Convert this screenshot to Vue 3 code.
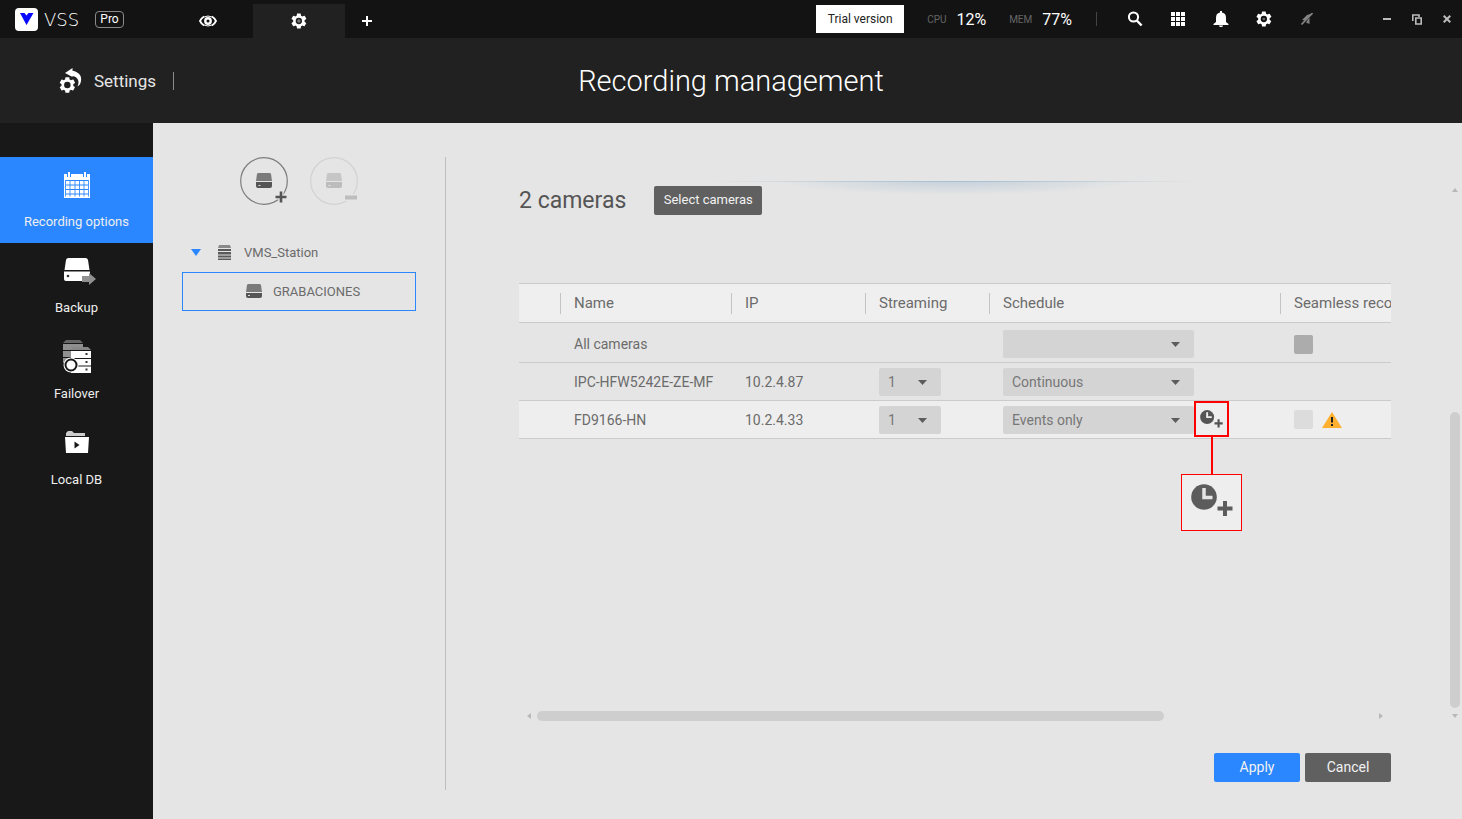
<script setup>
import { ref } from 'vue'

const navItems = [
  { id: 'recording', label: 'Recording options' },
  { id: 'backup', label: 'Backup' },
  { id: 'failover', label: 'Failover' },
  { id: 'local', label: 'Local DB' },
]
const activeNav = ref('recording')

const cameras = ref([
  { name: 'IPC-HFW5242E-ZE-MF', ip: '10.2.4.87', stream: '1', schedule: 'Continuous' },
  { name: 'FD9166-HN', ip: '10.2.4.33', stream: '1', schedule: 'Events only' },
])
const allSchedule = ref('')
const gearPath =
  'M19.4 13c.1-.3.1-.7.1-1s0-.7-.1-1l2.2-1.7c.2-.1.2-.4.1-.6l-2-3.5c-.2-.2-.4-.3-.7-.2l-2.6 1c-.5-.4-1.1-.7-1.7-1l-.4-2.6C14.3 2.2 14 2 13.8 2h-4c-.3 0-.5.2-.5.4L8.900 5c-.6.3-1.2.6-1.7 1l-2.500-1c-.3-.1-.5 0-.6.2l-2 3.500c-.1.2-.1.4.1.6L4.300 11c0 .3-.1.7-.1 1s0 .7.1 1l-2.100 1.700c-.2.1-.2.4-.1.6l2 3.500c.1.2.4.3.6.2l2.500-1c.5.4 1.100.7 1.700 1l.4 2.600c0 .2.2.4.5.4h4c.3 0 .5-.2.5-.4l.4-2.600c.6-.3 1.200-.6 1.700-1l2.500 1c.2.1.5 0 .6-.2l2-3.500c.1-.2.1-.5-.1-.6L19.400 13zM11.800 16.200a4.200 4.200 0 1 1 0-8.400 4.200 4.200 0 0 1 0 8.400z'
</script>

<template>
  <div class="app">
    <header class="topbar">
      <div class="brand">
        <svg class="brand-mark" width="23" height="23" viewBox="0 0 23 23" aria-hidden="true">
          <rect width="23" height="23" rx="4" fill="#fff" />
          <path d="M5 5h4.500l2 2.500L13.500 5H18.500l-7 12z" fill="#0808fa" />
        </svg>
        <span class="brand-name">VSS</span>
        <span class="brand-badge">Pro</span>
      </div>
      <nav class="tabs" aria-label="Tabs">
        <button class="tab" aria-label="Live view">
          <svg width="18" height="12" viewBox="0 0 18 12">
            <path d="M5 1.500Q2.500 3 1 6q1.500 3 4 4.500M13 1.500Q15.500 3 17 6q-1.500 3-4 4.500" fill="none" stroke="#fff" stroke-width="1.800" />
            <path d="M5 2Q9 0 13 2M5 10q4 2 8 0" fill="none" stroke="#fff" stroke-width="1" />
            <circle cx="9" cy="6" r="2.700" fill="none" stroke="#fff" stroke-width="2.400" />
          </svg>
        </button>
        <button class="tab tab-active" aria-label="Settings tab">
          <svg width="18" height="18" viewBox="0 0 24 24"><path :d="gearPath" fill="#fff" /><circle cx="11.800" cy="12" r="2.200" fill="#777" /></svg>
        </button>
        <button class="tab tab-add" aria-label="Add tab">
          <svg width="10" height="10" viewBox="0 0 10 10"><path d="M5 0v10M0 5h10" stroke="#fff" stroke-width="2" /></svg>
        </button>
      </nav>
      <div class="status">
        <button class="trial">Trial version</button>
        <span class="meter-label">CPU</span><span class="meter-value">12%</span>
        <span class="meter-label">MEM</span><span class="meter-value">77%</span>
        <span class="divider"></span>
      </div>
      <div class="tools">
        <button class="tool" aria-label="Search">
          <svg width="16" height="16" viewBox="0 0 16 16"><circle cx="6.500" cy="6" r="4.600" fill="none" stroke="#fff" stroke-width="2" /><path d="M9.800 9.500l4.800 5" stroke="#fff" stroke-width="2.500" /></svg>
        </button>
        <button class="tool" aria-label="Applications">
          <svg width="14" height="14" viewBox="0 0 14 14" fill="#fff"><path d="M0 0h4v4H0zM5 0h4v4H5zM10 0h4v4h-4zM0 5h4v4H0zM5 5h4v4H5zM10 5h4v4h-4zM0 10h4v4H0zM5 10h4v4H5zM10 10h4v4h-4z" /></svg>
        </button>
        <button class="tool" aria-label="Notifications">
          <svg width="16" height="16" viewBox="0 0 16 16" fill="#fff"><path d="M7 0h2v1.500C12 2 13 4 13 7v4l2.500 2v1h-15v-1L3 11V7c0-3 1-5 4-5.500zM6 14.500h4c0 2-4 2-4 0z" /></svg>
        </button>
        <button class="tool" aria-label="Preferences">
          <svg width="18" height="18" viewBox="0 0 24 24"><path :d="gearPath" fill="#fff" /><circle cx="11.800" cy="12" r="1.800" fill="#666" /></svg>
        </button>
        <button class="tool" aria-label="Connection">
          <svg width="12" height="12" viewBox="0 0 12 12"><path d="M11 .5L6 2 1 7l3 .5zM8.500 4.500L5 9.500 8.500 11V7z" fill="#858585" /><path d="M11.500 0L.5 11.500" stroke="#858585" stroke-width="1.600" /></svg>
        </button>
      </div>
      <div class="window-controls">
        <button class="win" aria-label="Minimize"><svg width="8" height="8" viewBox="0 0 8 8"><path d="M0 4h8" stroke="#bbb" stroke-width="2" /></svg></button>
        <button class="win" aria-label="Restore"><svg width="10" height="11" viewBox="0 0 10 11"><path d="M3.800 4h5.400v6H3.800z" fill="none" stroke="#bbb" stroke-width="1.600" /><path d="M.8 7V1h6.200v2" fill="none" stroke="#bbb" stroke-width="1.600" /></svg></button>
        <button class="win" aria-label="Close"><svg width="8" height="8" viewBox="0 0 8 8"><path d="M.7.7l6.600 6.600M7.300.7L.7 7.300" stroke="#bbb" stroke-width="2" /></svg></button>
      </div>
    </header>

    <div class="page-head">
      <a class="back" href="#settings">
        <svg width="24" height="26" viewBox="0 0 24 26">
          <svg x="0" y="8" width="17" height="18" viewBox="1 1 22 22"><path :d="gearPath" fill="#fff" /></svg>
          <path d="M6 5L13.500 0v2.800C20 4 23 8 22 13c-.4 2.700-1.500 4.500-3.600 5.500C21 13.500 19 9 13.500 8v1z" fill="#fff" />
        </svg>
        <span>Settings</span>
      </a>
      <h1>Recording management</h1>
    </div>

    <div class="body">
      <nav class="sidebar" aria-label="Sections">
        <button
          v-for="item in navItems"
          :key="item.id"
          class="nav-item"
          :class="{ 'nav-active': item.id === activeNav }"
          @click="activeNav = item.id"
        >
          <svg v-if="item.id === 'recording'" class="nav-icon" width="36" height="36" viewBox="0 0 36 36">
            <path d="M6 6h26v24H6z" fill="#fff" />
            <path d="M8 12.500h22M8 17h22M8 21.500h22M8 26h22" stroke="#2a87ff" stroke-width="1" />
            <path d="M7.500 12v16.500M12 12v16.500M17 12v16.500M21.500 12v16.500M26 12v16.500M30.500 12v16.500" stroke="#2a87ff" stroke-width="1" opacity=".85" />
            <path d="M11 4v5M27 4v5" stroke="#2a87ff" stroke-width="4" />
            <path d="M11 4v5M27 4v5" stroke="#fff" stroke-width="2" />
          </svg>
          <svg v-else-if="item.id === 'backup'" class="nav-icon" width="36" height="36" viewBox="0 0 36 36">
            <path d="M8 6q.4-2 2.500-2h17q2 0 2.500 2l1.500 10h-25zM6 17.500h26V25q0 2-2 2H8q-2 0-2-2z" fill="#fff" />
            <circle cx="10" cy="22" r="1.300" fill="#333" />
            <path d="M24 22h7v-3l7 6-7 6v-3h-7z" fill="#909090" />
          </svg>
          <svg v-else-if="item.id === 'failover'" class="nav-icon" width="36" height="36" viewBox="0 0 36 36">
            <path d="M8 0h14l3 3H5z" fill="#666" />
            <path d="M5 4h20v6H5zM5 11h8v6H5zM5 18h5v5H5z" fill="#909090" />
            <path d="M15 7h15l3 3H12z" fill="#888" />
            <path d="M13 11h20v7H13zM13 19h20v6.500H13zM13 26.500h20V33H13z" fill="#fff" />
            <path d="M27.500 14h2M27.500 22h2M27.500 29.500h2" stroke="#333" stroke-width="2" />
            <circle cx="13" cy="25" r="7.500" fill="#fff" />
            <circle cx="13" cy="25" r="5.500" fill="none" stroke="#181818" stroke-width="2" />
          </svg>
          <svg v-else class="nav-icon" width="36" height="36" viewBox="0 0 36 36">
            <path d="M8 9V7l2-2h4l2 2h11v3H8z" fill="#ccc" />
            <path d="M7 11h24l-1 16H8z" fill="#fff" />
            <path d="M16.500 15.500l5 3.500-5 3.500z" fill="#181818" />
          </svg>
          <span>{{ item.label }}</span>
        </button>
      </nav>

      <main class="main">
        <aside class="storage">
          <div class="storage-actions">
            <button class="circle" aria-label="Add storage">
              <svg width="50" height="50" viewBox="0 0 50 50">
                <circle cx="24" cy="24" r="23.300" fill="none" stroke="#7d7d7d" stroke-width="1.200" />
                <path d="M17 17q.3-1 1.500-1h11q1.200 0 1.500 1l1 7H16z" fill="#7a7a7a" />
                <path d="M16 25h16v4q0 2-2 2H18q-2 0-2-2z" fill="#555" /><path d="M18.500 28.500h2" stroke="#ddd" />
                <path d="M41 34v12M35 40h12" stroke="#e5e5e5" stroke-width="5" />
                <path d="M41 34.500v11M35.500 40h11" stroke="#555" stroke-width="2.600" />
              </svg>
            </button>
            <button class="circle" aria-label="Remove storage" disabled>
              <svg width="50" height="50" viewBox="0 0 50 50">
                <circle cx="24" cy="24" r="23.300" fill="none" stroke="#d2d2d2" stroke-width="1.200" />
                <path d="M17 17q.3-1 1.500-1h11q1.200 0 1.500 1l1 7H16z" fill="#c6c6c6" />
                <path d="M16 25h16v4q0 2-2 2H18q-2 0-2-2z" fill="#bcbcbc" /><path d="M18.500 28.500h2" stroke="#e5e5e5" />
                <path d="M34 40.500h14" stroke="#e5e5e5" stroke-width="7" />
                <path d="M35 40.500h12" stroke="#bdbdbd" stroke-width="4" />
              </svg>
            </button>
          </div>
          <ul class="tree">
            <li>
              <button class="tree-row station">
                <svg width="10" height="7" viewBox="0 0 10 7"><path d="M0 0h10L5 7z" fill="#2a87ff" /></svg>
                <svg width="13" height="15" viewBox="0 0 13 15"><path d="M1 0h11l1 3H0z" fill="#8a8a8a" /><path d="M0 4h13v2H0zM0 7h13v2.500H0zM0 10.500h13v2H0zM0 13.500h13V15H0z" fill="#5a5a5a" /></svg>
                <span>VMS_Station</span>
              </button>
              <ul class="tree">
                <li>
                  <button class="tree-row selected">
                    <svg width="16" height="14" viewBox="0 0 16 14"><path d="M1 1q.3-1 1.500-1h11q1.200 0 1.500 1l1 7H0z" fill="#7a7a7a" /><path d="M0 9h16v3q0 2-2 2H2q-2 0-2-2z" fill="#555" /><path d="M2 11.500h2" stroke="#ddd" /></svg>
                    <span>GRABACIONES</span>
                  </button>
                </li>
              </ul>
            </li>
          </ul>
        </aside>

        <section class="content">
          <div class="content-head">
            <h2>2 cameras</h2>
            <button class="btn btn-select">Select cameras</button>
          </div>

          <div class="table-area">
            <table>
              <colgroup>
                <col class="c-mark" /><col class="c-name" /><col class="c-ip" />
                <col class="c-stream" /><col class="c-sched" /><col class="c-seam" />
              </colgroup>
              <thead>
                <tr>
                  <td></td>
                  <th scope="col">Name</th>
                  <th scope="col">IP</th>
                  <th scope="col">Streaming</th>
                  <th scope="col">Schedule</th>
                  <th scope="col">Seamless recording</th>
                </tr>
              </thead>
              <tbody>
                <tr class="row-all">
                  <td></td>
                  <td>All cameras</td>
                  <td></td>
                  <td></td>
                  <td>
                    <div class="select-wrap wide">
                      <select v-model="allSchedule" aria-label="Schedule for all cameras">
                        <option value=""></option>
                        <option>Continuous</option>
                        <option>Events only</option>
                      </select>
                      <svg class="caret" width="9" height="5" viewBox="0 0 9 5"><path d="M0 0h9L4.500 5z" fill="#5c5c5c" /></svg>
                    </div>
                  </td>
                  <td><input type="checkbox" class="check check-all" aria-label="Seamless recording for all cameras" /></td>
                </tr>
                <tr v-for="(cam, i) in cameras" :key="cam.name" :class="{ current: i === 1 }">
                  <td></td>
                  <td>{{ cam.name }}</td>
                  <td>{{ cam.ip }}</td>
                  <td>
                    <div class="select-wrap narrow">
                      <select v-model="cam.stream" :aria-label="'Streaming for ' + cam.name">
                        <option>1</option>
                        <option>2</option>
                      </select>
                      <svg class="caret" width="9" height="5" viewBox="0 0 9 5"><path d="M0 0h9L4.500 5z" fill="#5c5c5c" /></svg>
                    </div>
                  </td>
                  <td>
                    <div class="schedule">
                      <div class="select-wrap wide">
                        <select v-model="cam.schedule" :aria-label="'Schedule for ' + cam.name">
                          <option>Continuous</option>
                          <option>Events only</option>
                        </select>
                        <svg class="caret" width="9" height="5" viewBox="0 0 9 5"><path d="M0 0h9L4.500 5z" fill="#5c5c5c" /></svg>
                      </div>
                      <div v-if="i === 1" class="callout-anchor">
                        <button class="clock" aria-label="Add schedule">
                          <svg width="23" height="18" viewBox="0 0 42 33">
                            <circle cx="13" cy="13" r="12.800" fill="#555" /><path d="M13 4v9h8.500" fill="none" stroke="#eee" stroke-width="3.500" />
                            <path d="M34 17v15M26.500 24.500h15" stroke="#555" stroke-width="4" />
                          </svg>
                        </button>
                        <div class="callout-line"></div>
                        <div class="callout-box">
                          <svg width="42" height="33" viewBox="0 0 42 33" aria-hidden="true">
                            <circle cx="13" cy="13" r="12.800" fill="#5c5c5c" /><path d="M13 4v9.500h8.500" fill="none" stroke="#e4e4e4" stroke-width="3.500" />
                            <path d="M34 17v15M26.500 24.500h15" stroke="#5c5c5c" stroke-width="4" />
                          </svg>
                        </div>
                      </div>
                    </div>
                  </td>
                  <td>
                    <div v-if="i === 1" class="seamless">
                      <input type="checkbox" class="check" disabled :aria-label="'Seamless recording for ' + cam.name" />
                      <svg width="20" height="16" viewBox="0 0 20 16"><path d="M10 0l10 16H0z" fill="#ffb02e" /><path d="M10 5v5.500M10 12v2" stroke="#222" stroke-width="2" /></svg>
                    </div>
                  </td>
                </tr>
              </tbody>
            </table>
          </div>

          <div class="hscroll" aria-hidden="true">
            <svg width="4" height="6" viewBox="0 0 4 6"><path d="M4 0v6L0 3z" fill="#b8b8b8" /></svg>
            <div class="htrack"><div class="hthumb"></div></div>
            <svg width="4" height="6" viewBox="0 0 4 6"><path d="M0 0v6l4-3z" fill="#b8b8b8" /></svg>
          </div>

          <div class="actions">
            <button class="btn btn-apply">Apply</button>
            <button class="btn btn-cancel">Cancel</button>
          </div>
        </section>

        <div class="vscroll" aria-hidden="true">
          <svg width="6" height="4" viewBox="0 0 6 4"><path d="M0 4h6L3 0z" fill="#b8b8b8" /></svg>
          <div class="vtrack"><div class="vthumb"></div></div>
          <svg width="6" height="4" viewBox="0 0 6 4"><path d="M0 0h6L3 4z" fill="#b8b8b8" /></svg>
        </div>
      </main>
    </div>
  </div>
</template>

<style>
body {
  background: #e5e5e5;
}
</style>

<style scoped>
* {
  box-sizing: border-box;
}
.app {
  display: flex;
  flex-direction: column;
  min-height: 100vh;
  font-family: Roboto, "Liberation Sans", sans-serif;
  font-size: 14px;
  color: #6b6b6b;
}
button {
  border: 0;
  padding: 0;
  background: none;
  font: inherit;
  color: inherit;
  cursor: pointer;
}
svg {
  display: block;
  flex: none;
}
.topbar {
  display: flex;
  height: 38px;
  background: #131313;
  color: #fff;
}
.brand {
  display: flex;
  align-items: center;
  width: 162px;
  padding-left: 15px;
}
.brand-name {
  width: 51px;
  margin-left: 6px;
  font-family: "DejaVu Sans Light", "DejaVu Sans", sans-serif;
  font-size: 18px;
  font-weight: 400;
}
.brand-badge {
  width: 29px;
  height: 17px;
  border: 1px solid #8a8a8a;
  border-radius: 4px;
  font-size: 12px;
  line-height: 15px;
  text-align: center;
}
.tabs {
  display: flex;
  align-items: flex-end;
}
.tab {
  display: flex;
  align-items: center;
  justify-content: center;
  width: 91px;
  height: 34px;
}
.tab-active {
  width: 92px;
  background: #212121;
}
.tab-add {
  width: 44px;
}
.status {
  display: flex;
  flex: 1;
  align-items: center;
  justify-content: flex-end;
}
.trial {
  width: 88px;
  height: 28px;
  background: #fff;
  color: #222;
  font-size: 12px;
}
.meter-label {
  margin: 0 10px 0 23px;
  color: #666;
  font-size: 10px;
}
.meter-value {
  font-size: 16px;
}
.divider {
  width: 1px;
  height: 14px;
  margin: 0 16px 0 24px;
  background: #444;
}
.tools {
  display: flex;
  margin-right: 44px;
}
.tool {
  display: flex;
  align-items: center;
  justify-content: center;
  width: 43px;
}
.window-controls {
  display: flex;
}
.win {
  display: flex;
  align-items: center;
  justify-content: center;
  width: 30px;
}
.page-head {
  display: grid;
  grid-template-columns: 1fr auto 1fr;
  align-items: center;
  height: 85px;
  background: #212121;
  color: #fff;
}
.back {
  display: flex;
  align-items: center;
  justify-self: start;
  gap: 11px;
  margin-left: 59px;
  padding-right: 18px;
  background: linear-gradient(#8c8c8c, #8c8c8c) right center / 1px 18px no-repeat;
  color: #e6e6e6;
  font-size: 17px;
  text-decoration: none;
}
h1 {
  margin: 0;
  font-size: 29px;
  font-weight: 300;
}
.body {
  display: flex;
  flex: 1;
}
.sidebar {
  display: flex;
  flex: none;
  flex-direction: column;
  width: 153px;
  padding-top: 34px;
  background: #181818;
  color: #eee;
}
.nav-item {
  display: flex;
  flex-direction: column;
  align-items: center;
  gap: 10px;
  height: 86px;
  padding-top: 11px;
  font-size: 13px;
}
.nav-active {
  background: #2a87ff;
}
.nav-icon {
  margin-right: 2px;
  overflow: visible;
}
.main {
  display: flex;
  flex: 1;
  min-width: 0;
  background: #e5e5e5;
}
.storage {
  flex: none;
  width: 293px;
  margin: 34px 0 29px;
  padding: 0 29px;
  border-right: 1px solid #bdbdbd;
}
.storage-actions {
  display: flex;
  gap: 20px;
  padding-left: 58px;
}
.tree {
  margin: 0;
  padding: 0;
  list-style: none;
}
.storage-actions + .tree {
  margin-top: 26px;
}
.tree-row {
  display: flex;
  align-items: center;
  width: 100%;
  height: 39px;
  padding-bottom: 1px;
  font-size: 13px;
}
.station {
  gap: 13px;
  padding-left: 9px;
}
.station svg:first-child {
  margin-right: 4px;
}
.selected {
  gap: 11px;
  padding-left: 63px;
  border: 1px solid #2a87ff;
}
.content {
  display: flex;
  flex: 1;
  flex-direction: column;
  min-width: 0;
  margin: 58px 59px 37px 73px;
}
.content-head {
  display: flex;
  align-items: flex-start;
  gap: 28px;
  height: 102px;
  padding-top: 5px;
  background:
    linear-gradient(90deg, transparent, #a9bfd0 50%, transparent) center top / 500px 1px no-repeat,
    radial-gradient(ellipse 180px 14px at 50% 0, rgba(150, 180, 205, 0.4), transparent) center top no-repeat;
}
h2 {
  margin: 0;
  color: #555;
  font-size: 23px;
  font-weight: 400;
  line-height: 29px;
}
.btn {
  height: 29px;
  padding-bottom: 2px;
  border-radius: 2px;
  background: #606060;
  color: #f2f2f2;
}
.btn-select {
  width: 108px;
  font-size: 13px;
}
.table-area {
  flex: 1;
  min-height: 260px;
  overflow: hidden;
}
table {
  width: 1020px;
  table-layout: fixed;
  border-collapse: separate;
  border-spacing: 0;
}
.c-mark {
  width: 41px;
}
.c-name {
  width: 171px;
}
.c-ip {
  width: 134px;
}
.c-stream {
  width: 124px;
}
.c-sched {
  width: 291px;
}
th,
td {
  height: 38px;
  padding: 0 0 0 14px;
  border-bottom: 1px solid #cbcbcb;
  text-align: left;
  white-space: nowrap;
}
thead th,
thead td {
  height: 40px;
  border-top: 1px solid #cbcbcb;
  background-color: #efefef;
  font-size: 15px;
  font-weight: 400;
}
thead th {
  background-image: linear-gradient(#c4c4c4, #c4c4c4);
  background-position: left center;
  background-size: 1px 21px;
  background-repeat: no-repeat;
}
.row-all td {
  height: 40px;
  padding-top: 3px;
}
.current td {
  background: #eee;
}
.select-wrap {
  position: relative;
}
.wide {
  width: 191px;
}
.narrow {
  width: 62px;
}
select {
  display: block;
  width: 100%;
  height: 28px;
  padding: 0 24px 0 9px;
  border: 0;
  border-radius: 2px;
  appearance: none;
  background: #d4d4d4;
  color: #777;
  font: inherit;
}
.caret {
  position: absolute;
  top: 12px;
  right: 14px;
  pointer-events: none;
}
.schedule,
.seamless {
  display: flex;
  align-items: center;
}
.seamless {
  gap: 9px;
}
.check {
  display: block;
  width: 19px;
  height: 19px;
  margin: 0;
  border-radius: 2px;
  appearance: none;
  background: #dcdcdc;
}
.check-all {
  background: #acacac;
}
.callout-anchor {
  position: relative;
  height: 36px;
  margin: -5px 0 -3px;
}
.clock {
  display: flex;
  align-items: center;
  justify-content: center;
  width: 35px;
  height: 36px;
  border: 2px solid #f00;
}
.callout-line {
  position: absolute;
  top: 36px;
  left: 17px;
  width: 2px;
  height: 38px;
  background: #f00;
}
.callout-box {
  position: absolute;
  top: 73px;
  left: -13px;
  display: flex;
  align-items: center;
  justify-content: center;
  width: 61px;
  height: 57px;
  padding-bottom: 4px;
  border: 1px solid #f00;
  background: #eee;
}
.hscroll {
  display: flex;
  align-items: center;
  gap: 6px;
  padding: 0 8px;
}
.htrack {
  flex: 1;
}
.hthumb {
  width: 75%;
  height: 10px;
  border-radius: 5px;
  background: #cecece;
}
.actions {
  display: flex;
  justify-content: flex-end;
  gap: 5px;
  margin-top: 32px;
}
.actions .btn {
  width: 86px;
}
.btn-apply {
  background: #2a87ff;
}
.vscroll {
  display: flex;
  flex: none;
  flex-direction: column;
  align-items: center;
  gap: 6px;
  width: 10px;
  margin: 65px 2px 101px 0;
}
.vtrack {
  display: flex;
  flex: 1;
  flex-direction: column;
  justify-content: flex-end;
}
.vthumb {
  width: 10px;
  height: 58%;
  border-radius: 5px;
  background: #cecece;
}
</style>
